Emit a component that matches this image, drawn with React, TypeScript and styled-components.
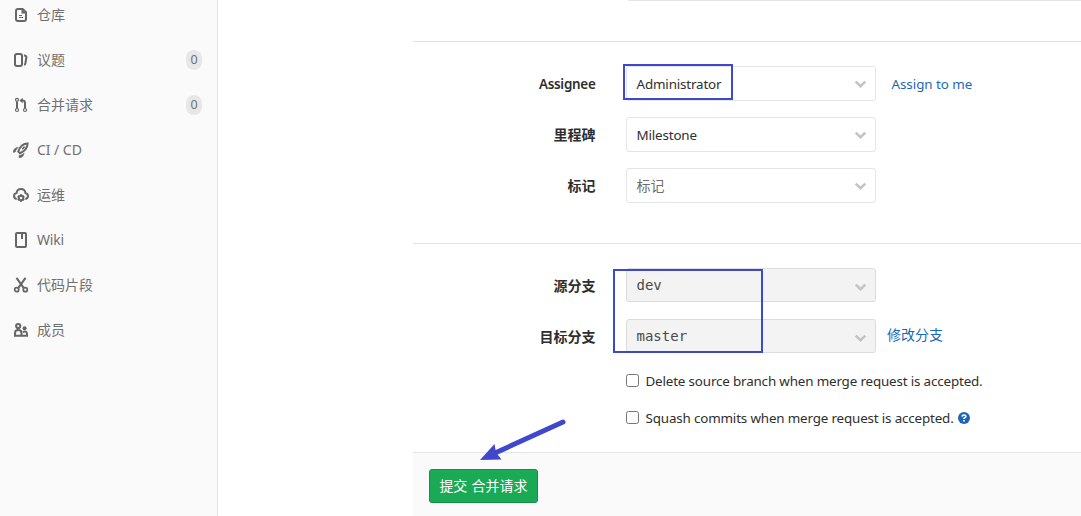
import React from "react";
import styled, { createGlobalStyle } from "styled-components";

const GlobalStyle = createGlobalStyle`
  * { box-sizing: border-box; }
  html, body { margin: 0; padding: 0; }
  body {
    width: 1081px;
    height: 516px;
    overflow: hidden;
    background: #fff;
    color: #2e2e2e;
    font: 14px/20px "Noto Sans", "Noto Sans CJK SC", sans-serif;
  }
`;

const Page = styled.div`
  position: relative;
  display: flex;
  width: 1081px;
  height: 516px;
  overflow: hidden;
`;

const Sidebar = styled.nav`
  width: 218px;
  flex: none;
  background: #fafafa;
  border-right: 1px solid #e3e3e3;
`;

const NavList = styled.ul`
  list-style: none;
  margin: -8px 0 0;
  padding: 0 15px 0 13px;
`;

const NavItem = styled.li`
  display: flex;
  align-items: center;
  height: 45px;
  color: #707070;
`;

const NavIcon = styled.svg`
  width: 16px;
  height: 16px;
  margin-right: 8px;
  fill: none;
  stroke: #666;
  stroke-width: 2;
  flex: none;
`;

const NavText = styled.span<{ $spacing?: number }>`
  flex: 1;
  letter-spacing: ${(p) => p.$spacing ?? 0}px;
`;

const Count = styled.span`
  width: 16px;
  height: 20px;
  border-radius: 8px;
  background: #e7e7e7;
  font-size: 12.5px;
  line-height: 20px;
  text-align: center;
`;

const Main = styled.main`
  width: 668px;
  margin-left: 195px;
  display: flex;
  flex-direction: column;
`;

const Previous = styled.div`
  flex: none;
  height: 42px;
  padding-left: 213px;
  border-bottom: 1px solid #e1e1e1;
`;

const PreviousField = styled.div`
  height: 1px;
  background: #e5e5e5;
  margin-left: 2px;
`;

const Section = styled.section<{ $height: number; $line?: boolean }>`
  flex: none;
  height: ${(p) => p.$height}px;
  padding-top: 24px;
  border-bottom: ${(p) => (p.$line ? "1px solid #e1e1e1" : "0")};
`;

const Row = styled.div`
  display: flex;
  height: 51px;
`;

const Label = styled.label`
  width: 182.5px;
  margin-right: 30.5px;
  padding-top: 8px;
  text-align: right;
  font-weight: 600;
`;

const Latin = styled.span<{ $spacing?: number }>`
  font-size: 13.4px;
  letter-spacing: ${(p) => p.$spacing ?? -0.16}px;
`;

const Select = styled.div<{ $disabled?: boolean; $muted?: boolean }>`
  display: flex;
  justify-content: space-between;
  width: 250px;
  height: ${(p) => (p.$disabled ? 34 : 35)}px;
  padding: ${(p) => (p.$disabled ? "6px 8px 0 9.5px" : "7px 8px 0 9.5px")};
  border: 1px solid ${(p) => (p.$disabled ? "#dcdcdc" : "#e5e5e5")};
  border-radius: 3px;
  background: ${(p) => (p.$disabled ? "#f3f3f3" : "#fff")};
  color: ${(p) => (p.$disabled ? "#4a4a4a" : p.$muted ? "#6e6e6e" : "#2e2e2e")};
  ${(p) => p.$disabled && `font-family: "DejaVu Sans Mono", monospace;`}
`;

const Chevron = styled.svg<{ $low?: boolean }>`
  width: 13px;
  height: 9px;
  margin-top: ${(p) => (p.$low ? 8 : 6)}px;
  fill: none;
  stroke: #c4c4c4;
  stroke-width: 2.6;
`;

const Link = styled.a<{ $gap: number; $top: number }>`
  margin-left: ${(p) => p.$gap}px;
  padding-top: ${(p) => p.$top}px;
  color: #1b69b6;
`;

const CheckRow = styled.label`
  display: flex;
  align-items: center;
  height: 20px;
  margin: 1px 0 17px 213px;
`;

const Box = styled.input`
  appearance: none;
  width: 13px;
  height: 13px;
  margin: -1px 6.5px 0 0;
  border: 1px solid #767676;
  border-radius: 2.5px;
  background: #fff;
`;

const Help = styled.svg`
  width: 12px;
  height: 12px;
  margin-left: 4px;
`;

const Footer = styled.footer`
  flex: 1;
  padding: 16px;
  background: #fafafa;
  border-top: 1px solid #e5e5e5;
`;

const Submit = styled.button`
  display: block;
  width: 109px;
  height: 34px;
  padding: 0;
  border: 1px solid #168f48;
  border-radius: 3px;
  background: #1aaa55;
  color: #fff;
  font: inherit;
  word-spacing: 0.6px;
`;

const Highlight = styled.div<{ $x: number; $y: number; $w: number; $h: number }>`
  position: absolute;
  left: ${(p) => p.$x}px;
  top: ${(p) => p.$y}px;
  width: ${(p) => p.$w}px;
  height: ${(p) => p.$h}px;
  border: 2px solid #3f48cc;
`;

const Arrow = styled.svg`
  position: absolute;
  left: 475px;
  top: 415px;
  width: 95px;
  height: 50px;
`;

const Down = ({ low }: { low?: boolean }) => (
  <Chevron viewBox="0 0 13 9" $low={low}>
    <path d="M1.7 1.6 6.5 6.2 11.3 1.6" />
  </Chevron>
);

const icons: Record<string, React.ReactNode> = {
  file: (
    <>
      <path d="M5 2h4.6L13 5.2V12a2 2 0 0 1-2 2H5a2 2 0 0 1-2-2V4a2 2 0 0 1 2-2z" />
      <path d="M8.5 2v4.5H13z" fill="#666" stroke="none" />
      <path d="M6 8.5h3M6 10.5h4" strokeWidth="1" />
    </>
  ),
  issues: (
    <>
      <rect x="2" y="2" width="7" height="12" rx="2" />
      <path d="M11 3.2l1.6.6q1 .5.8 1.5l-1 6q-.2 1.2-1.4 1.5" />
    </>
  ),
  merge: (
    <>
      <path d="M4 4.5v7M12 11.5V6q0-2.4-2.4-2.4H8" />
      <path d="M9.6 .8v5.4L6.4 3.5z" fill="#666" stroke="none" />
      <g strokeWidth="1.2">
        <circle cx="4" cy="2.8" r="1.5" fill="#fafafa" />
        <circle cx="4" cy="13" r="1.5" fill="#fafafa" />
        <circle cx="12" cy="13" r="1.5" fill="#fafafa" />
      </g>
    </>
  ),
  rocket: (
    <>
      <path d="M14.6 1.5C10.8 1.5 7 4.4 5.2 9.6l1.6 1.6C11.6 9.3 14.5 5.3 14.6 1.5z" />
      <path d="M9.2 7.2l2.4-2.6" strokeWidth="1.6" />
      <path d="M5.3 5.2Q.6 5.8 0 10.4l2.2-.4Q2.8 7.8 5.3 5.2zM11.2 11.2Q10.6 15.4 6.2 16L6 13.6q2.6-.4 5.2-2.4z" fill="#666" stroke="#666" strokeWidth=".5" />
    </>
  ),
  cloud: (
    <>
      <path d="M3.7 12Q1 11.3 1 9q0-2.3 2.5-2.9Q4.2 2 8 2t4.5 4.1Q15 6.7 15 9q0 2.3-2.7 3" />
      <circle cx="8" cy="11" r="2.2" />
      <path d="M8 7.2v1.6M8 13.2v1.6M4.7 9.1l1.4.8M9.9 12.1l1.4.8M11.3 9.1l-1.4.8M6.1 12.1l-1.4.8" />
    </>
  ),
  wiki: (
    <>
      <rect x="3" y="1" width="10" height="14" rx="1" />
      <path d="M9 1v6" />
    </>
  ),
  scissors: (
    <>
      <path d="M3.5.8 11 11.3M12.5.8 5 11.3" />
      <circle cx="3.7" cy="12.7" r="2" strokeWidth="1.7" />
      <circle cx="12.3" cy="12.7" r="2" strokeWidth="1.7" />
    </>
  ),
  members: (
    <>
      <circle cx="5.2" cy="4" r="2.1" />
      <path d="M2 13.7V11.2Q2 8 5.2 8t3.3 3.2v2.5z" />
      <circle cx="11.6" cy="6.2" r="2" fill="#666" stroke="none" />
      <path d="M9.8 10Q14 8.4 14 12v1.7H9" />
    </>
  ),
};

const nav = [
  { icon: "file", text: "仓库" },
  { icon: "issues", text: "议题", count: 0 },
  { icon: "merge", text: "合并请求", count: 0 },
  { icon: "rocket", text: "CI / CD", spacing: -0.05 },
  { icon: "cloud", text: "运维" },
  { icon: "wiki", text: "Wiki", spacing: -0.2 },
  { icon: "scissors", text: "代码片段" },
  { icon: "members", text: "成员" },
];

export default function App() {
  return (
    <Page>
      <GlobalStyle />
      <Sidebar>
        <NavList>
          {nav.map((n) => (
            <NavItem key={n.text}>
              <NavIcon viewBox="0 0 16 16">{icons[n.icon]}</NavIcon>
              <NavText $spacing={n.spacing}>{n.text}</NavText>
              {n.count !== undefined && <Count>{n.count}</Count>}
            </NavItem>
          ))}
        </NavList>
      </Sidebar>
      <Main>
        <Previous>
          <PreviousField />
        </Previous>
        <Section $height={202} $line>
          <Row>
            <Label><Latin $spacing={-0.25}>Assignee</Latin></Label>
            <Select><Latin>Administrator</Latin><Down /></Select>
            <Link $gap={15.5} $top={8}><Latin $spacing={-0.05}>Assign to me</Latin></Link>
          </Row>
          <Row>
            <Label>里程碑</Label>
            <Select><Latin>Milestone</Latin><Down /></Select>
          </Row>
          <Row>
            <Label>标记</Label>
            <Select $muted>标记<Down /></Select>
          </Row>
        </Section>
        <Section $height={208}>
          <Row>
            <Label>源分支</Label>
            <Select $disabled>dev<Down low /></Select>
          </Row>
          <Row>
            <Label>目标分支</Label>
            <Select $disabled>master<Down low /></Select>
            <Link $gap={11} $top={6}>修改分支</Link>
          </Row>
          <CheckRow>
            <Box type="checkbox" />
            <Latin>Delete source branch when merge request is accepted.</Latin>
          </CheckRow>
          <CheckRow>
            <Box type="checkbox" />
            <Latin>Squash commits when merge request is accepted.</Latin>
            <Help viewBox="0 0 12 12">
              <circle cx="6" cy="6" r="6" fill="#1f64b4" />
              <path d="M4 4.7Q4.2 3 6 3t1.9 1.6Q7.9 5.5 6 6.3v.8" fill="none" stroke="#fff" strokeWidth="1.6" />
              <rect x="5.2" y="8" width="1.6" height="1.6" fill="#fff" />
            </Help>
          </CheckRow>
        </Section>
        <Footer>
          <Submit>提交 合并请求</Submit>
        </Footer>
      </Main>
      <Highlight $x={623} $y={64} $w={110} $h={36} />
      <Highlight $x={613} $y={269} $w={150} $h={84} />
      <Arrow viewBox="0 0 95 50">
        <path d="M88 7 20 38" stroke="#3f48cc" strokeWidth="5" strokeLinecap="round" />
        <path d="M5 45 19.5 29 21 37.5 26.5 44.5z" fill="#3f48cc" />
      </Arrow>
    </Page>
  );
}
